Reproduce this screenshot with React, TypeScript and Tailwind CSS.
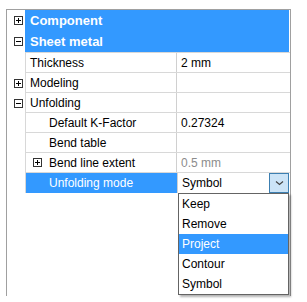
import React from "react";

type Row = {
    name: string;
    value?: string;
    level: number;
    toggle?: "plus" | "minus";
    muted?: boolean;
};

const rows: Row[] = [
    { name: "Thickness", value: "2 mm", level: 0 },
    { name: "Modeling", level: 0, toggle: "plus" },
    { name: "Unfolding", level: 0, toggle: "minus" },
    { name: "Default K-Factor", value: "0.27324", level: 1 },
    { name: "Bend table", level: 1 },
    { name: "Bend line extent", value: "0.5 mm", level: 1, toggle: "plus", muted: true },
];

const options = ["Keep", "Remove", "Project", "Contour", "Symbol"];

function Toggle({ kind }: { kind: "plus" | "minus" }) {
    return (
        <svg width="9" height="9" viewBox="0 0 9 9" className="block">
            <rect x="0.5" y="0.5" width="8" height="8" fill="#fff" stroke="#333" />
            <line x1="2" y1="4.5" x2="7" y2="4.5" stroke="#000" />
            {kind === "plus" && <line x1="4.5" y1="2" x2="4.5" y2="7" stroke="#000" />}
        </svg>
    );
}

export default function App() {
    return (
        <div
            className="w-[307px] h-[302px] bg-white text-[12px] text-black"
            style={{ fontFamily: '"Liberation Sans", Arial, sans-serif' }}
        >
            <div className="ml-[6px] mt-[9px] w-[285px] h-[287px] border-l border-t border-r border-[#a0a0a0] relative">
                {/* category headers */}
                <div className="flex h-[21px]">
                    <div className="w-[18px] flex items-center justify-center pl-[5px]">
                        <Toggle kind="plus" />
                    </div>
                    <div className="flex-1 bg-[#3399ff] text-white font-bold text-[13px] pl-[5px] flex items-center mr-[1px]">
                        Component
                    </div>
                </div>
                <div className="flex h-[21px]">
                    <div className="w-[18px] flex items-center justify-center pl-[5px]">
                        <Toggle kind="minus" />
                    </div>
                    <div className="flex-1 bg-[#3399ff] text-white font-bold text-[13px] pl-[5px] flex items-center mr-[1px]">
                        Sheet metal
                    </div>
                </div>

                <div className="ml-[18px] h-[1px] bg-[#d8d8d8]" />

                {rows.map((r) => (
                    <div key={r.name} className="flex h-[20px]">
                        <div className="w-[18px] flex items-center justify-center pl-[5px]">
                            {r.level === 0 && r.toggle && <Toggle kind={r.toggle} />}
                        </div>
                        <div className="flex-1 flex border-l border-b border-[#d8d8d8]">
                            <div
                                className={
                                    "w-[151px] flex items-center border-r border-[#d0d0d0] " +
                                    (r.level === 0 ? "pl-[4px]" : "pl-[7px]")
                                }
                            >
                                {r.level === 1 && (
                                    <span className="w-[15px] flex items-center">
                                        {r.toggle && <Toggle kind={r.toggle} />}
                                    </span>
                                )}
                                <span className={r.level === 1 ? "pl-[1px]" : ""}>{r.name}</span>
                            </div>
                            <div className={"flex-1 flex items-center pl-[4px] " + (r.muted ? "text-[#8c8c8c]" : "")}>
                                {r.value}
                            </div>
                        </div>
                    </div>
                ))}

                {/* selected row with combo */}
                <div className="flex h-[20px]">
                    <div className="w-[18px]" />
                    <div className="flex-1 flex border-l border-[#d8d8d8]">
                        <div className="w-[151px] bg-[#3399ff] text-white flex items-center pl-[23px]">
                            Unfolding mode
                        </div>
                        <div className="w-[1px] bg-[#d0d0d0]" />
                        <div className="flex-1 flex items-center pl-[4px] bg-white">
                            <span className="flex-1">Symbol</span>
                            <div className="w-[20px] h-[20px] bg-[#cce4f7] border border-[#3c7fb1] flex items-center justify-center mr-[1px]">
                                <svg width="9" height="6" viewBox="0 0 9 6">
                                    <path d="M1 1.5 L4.5 4.5 L8 1.5" fill="none" stroke="#444" strokeWidth="1.2" />
                                </svg>
                            </div>
                        </div>
                    </div>
                </div>

                {/* dropdown list */}
                <div className="absolute left-[171px] top-[183px] w-[111px] bg-white border border-[#646464] shadow-[2px_2px_2px_rgba(0,0,0,0.3)]">
                    {options.map((o) => (
                        <div
                            key={o}
                            className={
                                "h-[20px] flex items-center pl-[3px] " +
                                (o === "Project" ? "bg-[#3399ff] text-white" : "")
                            }
                        >
                            {o}
                        </div>
                    ))}
                </div>
            </div>
        </div>
    );
}
